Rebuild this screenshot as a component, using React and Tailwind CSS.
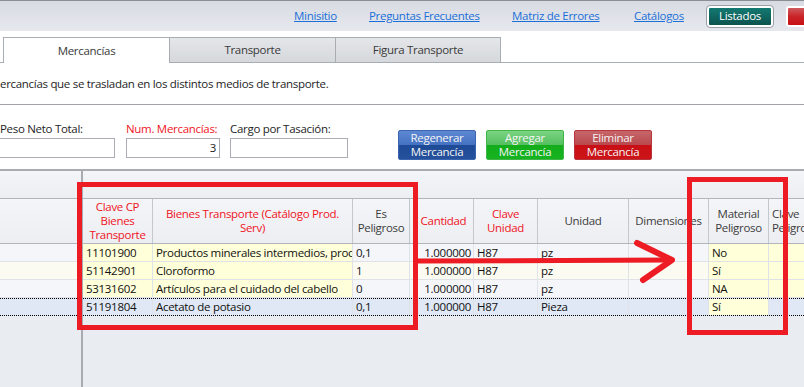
import React from 'react';

const links = [
  { label: 'Minisitio', w: 'w-[75px]' },
  { label: 'Preguntas Frecuentes', w: 'w-[143px]' },
  { label: 'Matriz de Errores', w: 'w-[122px]' },
  { label: 'Catálogos', w: 'w-[73px]' },
];

const columns = [
  { w: 'w-[70px]', lines: ['Clave CP', 'Bienes', 'Transporte'], red: true },
  { w: 'w-[200px]', lines: ['Bienes Transporte (Catálogo Prod.', 'Serv)'], red: true },
  { w: 'w-[57px]', lines: ['Es', 'Peligroso'] },
  { w: 'w-[4px]', lines: [] },
  { w: 'w-[60px]', lines: ['Cantidad'], red: true, align: 'right' },
  { w: 'w-[64px]', lines: ['Clave', 'Unidad'], red: true },
  { w: 'w-[91px]', lines: ['Unidad'] },
  { w: 'w-[80px]', lines: ['Dimensiones'] },
  { w: 'w-[60px]', lines: ['Material', 'Peligroso'] },
  { w: 'w-[80px]', lines: ['Clave', 'Peligroso'], left: true },
];

const rows = [
  ['11101900', 'Productos minerales intermedios, procesados', '0,1', '', '1.000000', 'H87', 'pz', '', 'No', ''],
  ['51142901', 'Cloroformo', '1', '', '1.000000', 'H87', 'pz', '', 'Sí', ''],
  ['53131602', 'Artículos para el cuidado del cabello', '0', '', '1.000000', 'H87', 'pz', '', 'NA', ''],
  ['51191804', 'Acetato de potasio', '0,1', '', '1.000000', 'H87', 'Pieza', '', 'Sí', ''],
];

const editable = [0, 1, 9];

function rowBg(i) {
  if (i === 3) return 'bg-[#dfe8f4]';
  return i % 2 === 1 ? 'bg-[#fbfbf1]' : 'bg-[#f5f6f9]';
}

function cellBg(i, c) {
  if (c === 8) return 'bg-[#ffffd9]';
  if (editable.includes(c) && i !== 3) return 'bg-[#ffffd9]';
  return '';
}

function TwoToneButton({ top, bottom, tone }) {
  const tones = {
    blue: 'bg-[linear-gradient(to_bottom,#5d88d3_0%,#4471c2_50%,#1f4a95_50%,#25519d_100%)] border-[#3a64ad]',
    green: 'bg-[linear-gradient(to_bottom,#7ad482_0%,#55bf5f_50%,#13ad1c_50%,#17b320_100%)] border-[#3fb548]',
    red: 'bg-[linear-gradient(to_bottom,#c6666a_0%,#b9494e_50%,#c80f15_50%,#cd1419_100%)] border-[#b8363b]',
  };
  return (
    <div className={`h-[30px] w-[78px] rounded-[2px] border flex flex-col items-center justify-center text-[#f4f4f4] leading-[14px] ${tones[tone]}`}>
      <span>{top}</span>
      <span>{bottom}</span>
    </div>
  );
}

export default function App() {
  return (
    <div className="relative w-[804px] h-[387px] overflow-hidden bg-white text-[11.5px] text-[#1e1e1e] font-['Open_Sans',sans-serif] tracking-[-0.3px]">
      {/* top bar */}
      <div className="h-[31px] border-t border-[#8a8e95] bg-gradient-to-b from-[#d8dbe2] to-[#e6e8ee] flex items-center pl-[294px]">
        {links.map((l) => (
          <div key={l.label} className={`${l.w} shrink-0`}>
            <span className="text-[#1b6fd8] underline">{l.label}</span>
          </div>
        ))}
        <div className="w-[66px] h-[21px] shrink-0 rounded-[3px] border-2 border-white outline outline-[#9aa0a8] bg-gradient-to-b from-[#137a72] to-[#0c534f] text-white flex items-center justify-center">
          Listados
        </div>
        <div className="ml-[13px] w-[60px] h-[21px] shrink-0 rounded-[3px] border-2 border-white bg-[linear-gradient(to_bottom,#cf5a5e_0%,#c92428_50%,#c80f15_100%)]" />
      </div>

      {/* tabs */}
      <div className="h-[32px] flex items-end">
        <div className="w-[3px] h-[1px] bg-[#a8acb3]" />
        <div className="w-[167px] h-[26px] border border-b-0 border-[#a8acb3] bg-white flex items-center justify-center text-[#3a3a3a]">
          Mercancías
        </div>
        <div className="w-[166px] h-[26px] border-y border-r border-[#a8acb3] bg-gradient-to-b from-[#e4e6e9] to-[#d5d8dc] flex items-center justify-center text-[#3a3a3a]">
          Transporte
        </div>
        <div className="w-[165px] h-[26px] border-y border-r border-[#a8acb3] bg-gradient-to-b from-[#e4e6e9] to-[#d5d8dc] flex items-center justify-center text-[#3a3a3a]">
          Figura Transporte
        </div>
        <div className="flex-1 h-[1px] bg-[#a8acb3]" />
      </div>

      {/* description */}
      <div className="h-[42px] flex items-center text-[#1e1e1e] border-b border-[#a0a3a8]">
        ercancías que se trasladan en los distintos medios de transporte.
      </div>

      {/* form */}
      <div className="h-[66px] flex border-b-2 border-[#a9acb1] whitespace-nowrap">
        <div className="w-[116px] ml-[-1px] pt-[16px] shrink-0">
          <div className="h-[16px] leading-[16px] pl-[1px]">Peso Neto Total:</div>
          <div className="mt-[1px] h-[20px] border border-[#a9adb3] bg-white" />
        </div>
        <div className="w-[94px] ml-[11px] pt-[16px] shrink-0">
          <div className="h-[16px] leading-[16px] text-[#f0141e]">Num. Mercancías:</div>
          <div className="mt-[1px] h-[20px] border border-[#a9adb3] bg-white flex items-center justify-end pr-[3px]">3</div>
        </div>
        <div className="w-[118px] ml-[10px] pt-[16px] shrink-0">
          <div className="h-[16px] leading-[16px]">Cargo por Tasación:</div>
          <div className="mt-[1px] h-[20px] border border-[#a9adb3] bg-white" />
        </div>
        <div className="ml-[50px] pt-[25px] flex gap-[10px]">
          <TwoToneButton top="Regenerar" bottom="Mercancía" tone="blue" />
          <TwoToneButton top="Agregar" bottom="Mercancía" tone="green" />
          <TwoToneButton top="Eliminar" bottom="Mercancía" tone="red" />
        </div>
      </div>

      {/* grid */}
      <div className="h-[216px] flex bg-[#e9ecf1]">
        {/* frozen pane */}
        <div className="w-[83px] shrink-0 border-r-2 border-[#a8acb2]">
          <div className="h-[28px] border-b border-[#b1b5bc] bg-gradient-to-b from-[#f4f5f8] to-[#eceef2]" />
          <div className="h-[45px] border-b border-[#b1b5bc] bg-gradient-to-b from-[#f4f5f8] to-[#eceef2]" />
          {rows.map((r, i) => (
            <div
              key={i}
              className={`h-[18px] ${rowBg(i)} ${i === 3 ? 'border-y border-dotted border-black' : 'border-b border-[#dfe2e7]'}`}
            />
          ))}
        </div>
        {/* main pane */}
        <div className="flex-1 overflow-hidden">
          <div className="h-[28px] border-b border-[#b1b5bc] bg-gradient-to-b from-[#f4f5f8] to-[#eceef2]" />
          <div className="h-[45px] flex border-b border-[#b1b5bc] bg-gradient-to-b from-[#f4f5f8] to-[#eceef2]">
            {columns.map((c, ci) => (
              <div
                key={ci}
                className={`${c.w} shrink-0 h-full border-r border-[#c3c7ce] flex flex-col justify-center leading-[14px] overflow-hidden whitespace-nowrap ${c.left ? 'items-start pl-[3px]' : 'items-center text-center'} ${c.red ? 'text-[#f0141e]' : 'text-[#3c3c3c]'}`}
              >
                {c.lines.map((t) => (
                  <span key={t}>{t}</span>
                ))}
              </div>
            ))}
          </div>
          {rows.map((r, i) => (
            <div
              key={i}
              className={`h-[18px] flex ${rowBg(i)} ${i === 3 ? 'border-y border-dotted border-black' : 'border-b border-[#dfe2e7]'}`}
            >
              {r.map((v, ci) => (
                <div
                  key={ci}
                  className={`${columns[ci].w} shrink-0 h-full border-r border-[#dfe2e7] flex items-center overflow-hidden whitespace-nowrap leading-[16px] text-[#111] ${cellBg(i, ci)} ${columns[ci].align === 'right' ? 'justify-end pr-[2px]' : 'pl-[3px]'}`}
                >
                  {v}
                </div>
              ))}
            </div>
          ))}
        </div>
      </div>

      {/* annotations */}
      <div className="absolute left-[77px] top-[182px] w-[341px] h-[148px] border-[5px] border-[#ed1c24]" />
      <div className="absolute left-[687px] top-[177px] w-[101px] h-[158px] border-[5px] border-[#ed1c24]" />
      <svg className="absolute left-0 top-0 pointer-events-none" width="804" height="387">
        <line x1="416" y1="261" x2="671" y2="260" stroke="#ed1c24" strokeWidth="5" />
        <polyline
          points="637,243 672,260 643,280"
          fill="none"
          stroke="#ed1c24"
          strokeWidth="6"
          strokeLinecap="round"
          strokeLinejoin="round"
        />
      </svg>
    </div>
  );
}
